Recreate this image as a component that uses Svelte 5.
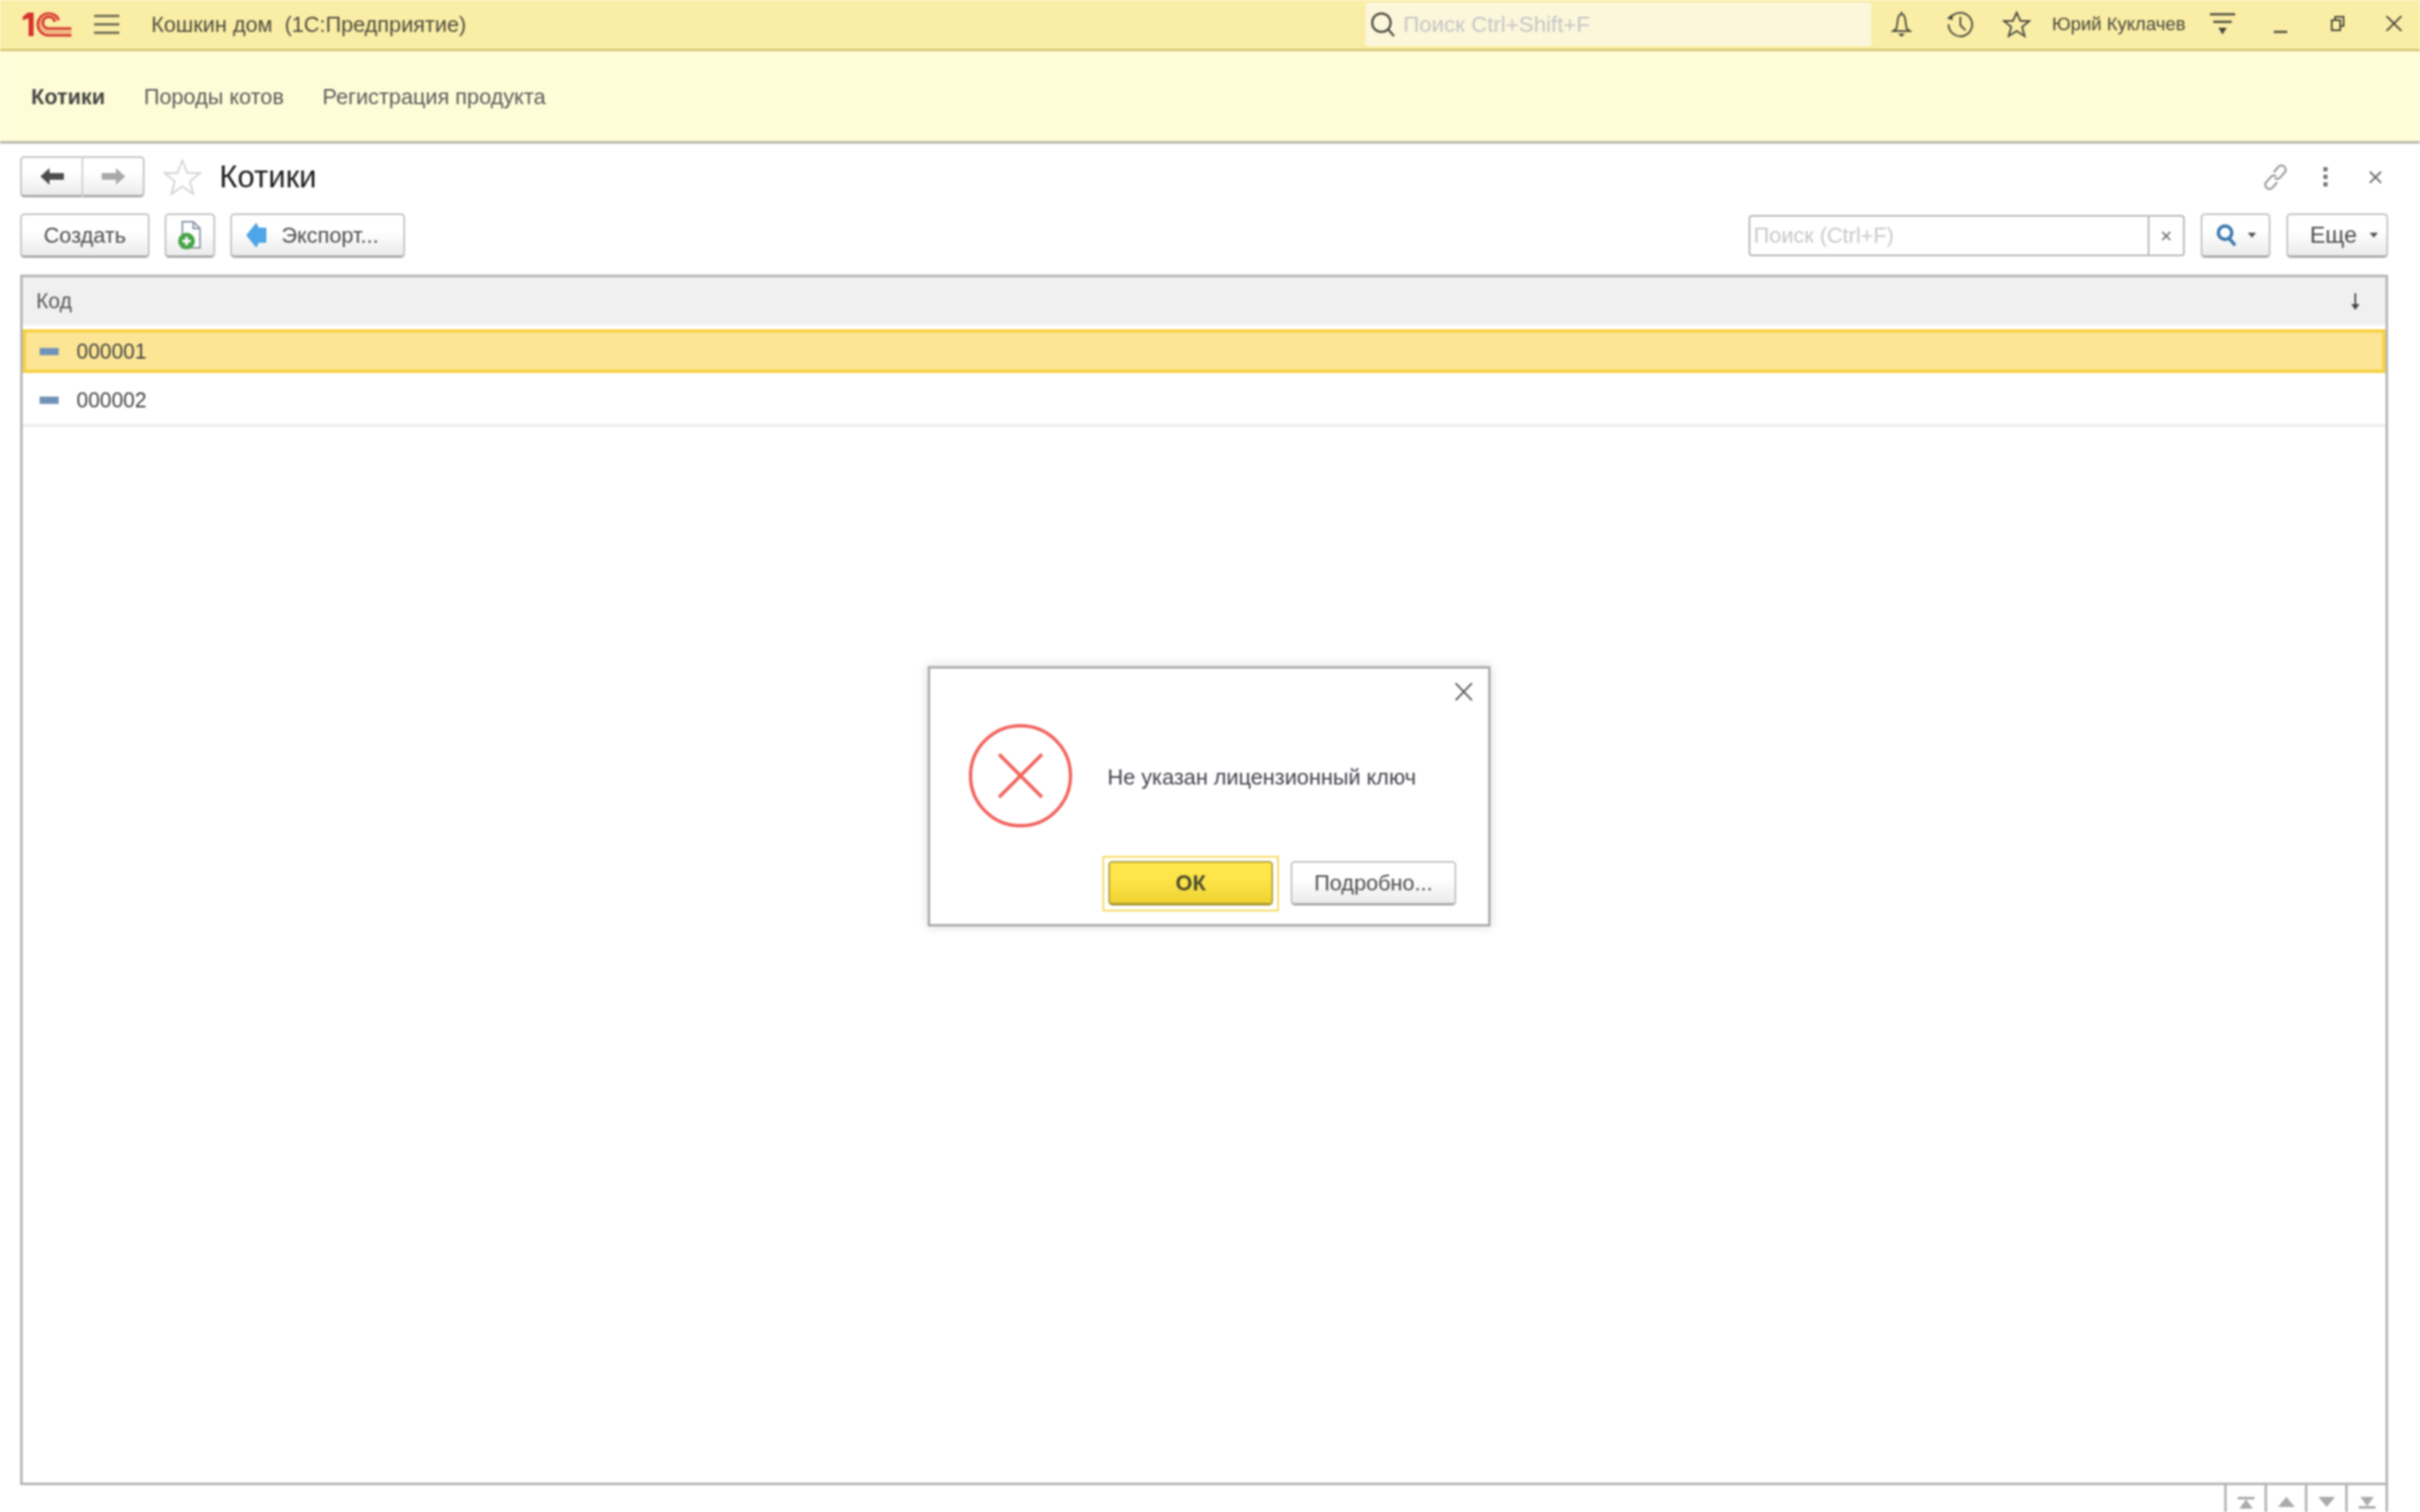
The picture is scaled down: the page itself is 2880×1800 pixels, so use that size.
<script lang="ts">
    const sections = ['Котики', 'Породы котов', 'Регистрация продукта'];
    const rows = ['000001', '000002'];
</script>

<div class="app">
    <header class="topbar">
        <svg class="logo" width="60" height="30" viewBox="0 0 60 30" fill="none">
            <path d="M1 6 7 1h7v28H8V8L1 10z" fill="#d5342e" />
            <path d="M44 10A13 13 0 1 0 31 28H59" stroke="#d5342e" stroke-width="3" />
            <path d="M41.500 11A10 10 0 1 0 31 24H59" stroke="#eda878" stroke-width="2.500" />
            <path d="M39 12A7 7 0 1 0 31 20H59" stroke="#d5342e" stroke-width="3" />
        </svg>
        <svg class="burger" width="30" height="24" viewBox="0 0 30 24" stroke="#5d5a48" stroke-width="2.500">
            <path d="M0 2h30M0 12h30M0 22h30" />
        </svg>
        <span class="app-title">Кошкин дом  (1С:Предприятие)</span>

        <div class="global-search">
            <svg width="32" height="32" viewBox="0 0 32 32" fill="none" stroke="#45453c" stroke-width="2.500">
                <circle cx="14" cy="14" r="11" />
                <path d="m22 22 7 8" />
            </svg>
            <span>Поиск Ctrl+Shift+F</span>
        </div>

        <svg class="tb-icon bell" width="28" height="32" viewBox="0 0 28 32" fill="none" stroke="#45453c" stroke-width="2">
            <path d="M14 1v3M10 8q1-4 4-4t4 4l2 13 4 3H4l4-3z" />
            <path d="M10 27h8l-4 4z" fill="#45453c" stroke="none" />
        </svg>
        <svg class="tb-icon history" width="34" height="32" viewBox="0 0 34 32" fill="none" stroke="#45453c" stroke-width="2">
            <path d="M5 9A14 14 0 1 1 3 16" />
            <path d="m1 9 6-5 1 7z" fill="#45453c" stroke="none" />
            <path d="M17 7v10l6 6" />
        </svg>
        <svg class="tb-icon star" width="34" height="32" viewBox="0 0 34 32" fill="none" stroke="#45453c" stroke-width="2">
            <path d="m17 2 4.500 10H32l-8.500 7 3 11L17 24 7.500 30l3-11L2 12h10.500z" />
        </svg>
        <span class="user">Юрий Куклачев</span>
        <svg class="tb-icon filter" width="30" height="28" viewBox="0 0 30 28" stroke="#45453c" stroke-width="2.500">
            <path d="M0 2h30M4 11h22" />
            <path d="M10 18h10l-5 8z" fill="#45453c" stroke="none" />
        </svg>
        <svg class="tb-icon minimize" width="16" height="4" viewBox="0 0 16 4" stroke="#45453c" stroke-width="2.500">
            <path d="M0 2h16" />
        </svg>
        <svg class="tb-icon restore" width="16" height="18" viewBox="0 0 16 18" fill="none" stroke="#45453c" stroke-width="2">
            <path d="M5 4V1h10v11h-3" />
            <path d="M1 5h10v12H1z" />
        </svg>
        <svg class="tb-icon win-close" width="20" height="18" viewBox="0 0 20 18" stroke="#45453c" stroke-width="2">
            <path d="m1 0 18 18M19 0 1 18" />
        </svg>
    </header>

    <nav class="sections">
        {#each sections as section, i}
            <span class:active={i === 0}>{section}</span>
        {/each}
    </nav>

    <main class="form">
        <div class="title-row">
            <div class="nav-buttons">
                <button class="btn">
                    <svg width="28" height="20" viewBox="0 0 28 20" fill="#4d4d4d"><path d="M0 10 11 0v6h17v8H11v6z" /></svg>
                </button>
                <button class="btn">
                    <svg width="28" height="20" viewBox="0 0 28 20" fill="#a9a9a9"><path d="M28 10 17 0v6H0v8h17v6z" /></svg>
                </button>
            </div>
            <svg class="fav" width="46" height="44" viewBox="0 0 46 44" fill="none" stroke="#d2d2d2" stroke-width="2">
                <path d="m23 2 6 15h15L32 27l4 15-13-9-13 9 4-15L2 17h15z" />
            </svg>
            <h1>Котики</h1>
            <div class="form-actions">
                <svg width="32" height="32" viewBox="0 0 32 32" fill="none" stroke="#8c8c8c" stroke-width="2">
                    <path d="m14 10 6-7q3-2 6 0t2 6l-7 8q-3 2-6 0" />
                    <path d="m18 22-6 7q-3 2-6 0t-2-6l7-8q3-2 6 0" />
                </svg>
                <svg width="5" height="24" viewBox="0 0 5 24" fill="#777">
                    <rect x="0" y="0" width="5" height="5" /><rect x="0" y="9" width="5" height="5" /><rect x="0" y="18" width="5" height="5" />
                </svg>
                <svg width="14" height="14" viewBox="0 0 14 14" stroke="#666" stroke-width="2">
                    <path d="m0 0 14 14M14 0 0 14" />
                </svg>
            </div>
        </div>

        <div class="toolbar">
            <button class="btn create">Создать</button>
            <button class="btn doc">
                <svg width="30" height="34" viewBox="0 0 30 34">
                    <path d="M6 1h13l8 8v23H6z" fill="#fff" stroke="#8a97a8" stroke-width="2" />
                    <path d="M19 1v8h8" fill="none" stroke="#8a97a8" stroke-width="2" />
                    <circle cx="11" cy="24" r="10" fill="#46a548" />
                    <path d="M6 24h10M11 19v10" stroke="#fff" stroke-width="3" />
                </svg>
            </button>
            <button class="btn export">
                <svg width="24" height="30" viewBox="0 0 24 30"><path d="M0 15 12 0l3 6h9v18h-9l-3 6z" fill="#4ea6e6" /></svg>
                Экспорт...
            </button>

            <div class="search">
                <span class="search-input">Поиск (Ctrl+F)</span>
                <span class="search-clear">×</span>
            </div>
            <button class="btn search-btn">
                <svg width="26" height="28" viewBox="0 0 26 28" fill="none" stroke="#3b78ad" stroke-width="4">
                    <circle cx="11" cy="11" r="8" />
                    <path d="m16 18 7 8" />
                </svg>
                <i class="caret"></i>
            </button>
            <button class="btn more">Еще <i class="caret"></i></button>
        </div>

        <div class="table">
            <div class="thead">
                <span>Код</span>
                <svg width="10" height="20" viewBox="0 0 10 20" fill="#444"><path d="M4 0h2v13h4l-5 7-5-7h4z" /></svg>
            </div>
            {#each rows as row, i}
                <div class="row" class:selected={i === 0}>
                    <i class="row-icon"></i>
                    <span>{row}</span>
                </div>
            {/each}
        </div>

        <div class="pager">
            <button aria-label="В начало"><svg width="20" height="14" viewBox="0 0 20 14" fill="#aaa"><path d="M0 0h20v3H0zM10 3l8 11H2z" /></svg></button>
            <button aria-label="Выше"><svg width="20" height="12" viewBox="0 0 20 12" fill="#aaa"><path d="M10 0l10 12H0z" /></svg></button>
            <button aria-label="Ниже"><svg width="20" height="12" viewBox="0 0 20 12" fill="#aaa"><path d="M0 0h20L10 12z" /></svg></button>
            <button aria-label="В конец"><svg width="20" height="14" viewBox="0 0 20 14" fill="#aaa"><path d="M2 0h16l-8 11zM0 11h20v3H0z" /></svg></button>
        </div>
    </main>

    <!-- modal message box -->
    <div class="dialog">
        <svg class="dialog-close" width="20" height="21" viewBox="0 0 20 21" stroke="#555" stroke-width="2">
            <path d="m0 0 20 21M20 0 0 21" />
        </svg>
        <div class="dialog-body">
            <svg width="123" height="123" viewBox="0 0 123 123" fill="none" stroke="#f2625c" stroke-width="4">
                <circle cx="61.500" cy="61.500" r="59.500" />
                <path d="m36 36 51 51M87 36 36 87" />
            </svg>
            <p>Не указан лицензионный ключ</p>
        </div>
        <div class="dialog-buttons">
            <button class="btn ok">ОК</button>
            <button class="btn details">Подробно...</button>
        </div>
    </div>
</div>

<style>
    .app {
        position: relative;
        display: flex;
        flex-direction: column;
        width: 2880px;
        height: 1800px;
        overflow: hidden;
        background: #fff;
        color: #444;
        font-family: "Liberation Sans", Arial, sans-serif;
        font-size: 25.8px;
        filter: blur(0.8px);
    }

    .topbar {
        display: flex;
        flex: none;
        align-items: center;
        height: 58px;
        padding-left: 26px;
        border-bottom: 3px solid #d8c87c;
        background: #faeda5;
    }

    .burger {
        margin-left: 26px;
    }

    .app-title {
        margin-left: 38px;
        color: #4e4c3f;
        white-space: pre;
    }

    .global-search {
        display: flex;
        align-items: center;
        gap: 8px;
        width: 602px;
        height: 52px;
        margin-left: auto;
        padding-left: 5px;
        box-sizing: border-box;
        border-radius: 3px;
        background: #fcf6da;
        color: #c6c6c6;
        font-size: 26.500px;
    }

    .tb-icon {
        flex: none;
    }

    .bell {
        margin-left: 22px;
    }

    .history {
        margin-left: 39px;
    }

    .star {
        margin-left: 33px;
    }

    .user {
        margin-left: 25px;
        width: 160px;
        color: #45453c;
        font-size: 22px;
        white-space: nowrap;
    }

    .filter {
        margin-left: 28px;
    }

    .minimize {
        margin: 18px 0 0 46px;
    }

    .restore {
        margin: -2px 0 0 52px;
    }

    .win-close {
        margin: -2px 21px 0 49px;
    }

    .sections {
        display: flex;
        flex: none;
        align-items: center;
        gap: 46px;
        height: 106px;
        padding: 1px 0 0 37px;
        border-bottom: 3px solid #b7b7ab;
        background: #fffdd8;
        color: #5a5a5a;
    }

    .sections .active {
        color: #444;
        font-weight: 700;
    }

    .form {
        display: flex;
        flex: 1;
        flex-direction: column;
        min-height: 0;
        padding: 15px 38px 0 24px;
    }

    .title-row {
        display: flex;
        flex: none;
        align-items: center;
        height: 49px;
    }

    .btn {
        display: inline-flex;
        align-items: center;
        justify-content: center;
        box-sizing: border-box;
        height: 53px;
        padding: 0;
        border: 2px solid #c2c2c2;
        border-bottom: 3px solid #aaa;
        border-radius: 5px;
        background: linear-gradient(#fff 40%, #ebebeb);
        color: #4c4c4c;
        font: inherit;
    }

    .nav-buttons {
        display: flex;
        width: 148px;
    }

    .nav-buttons .btn {
        flex: 1;
        height: 49px;
    }

    .nav-buttons .btn:first-child {
        border-right: 1px solid #d0d0d0;
        border-radius: 5px 0 0 5px;
    }

    .nav-buttons .btn:last-child {
        border-left: 1px solid #d0d0d0;
        border-radius: 0 5px 5px 0;
    }

    .fav {
        margin-left: 22px;
    }

    h1 {
        margin: 0 0 0 21px;
        color: #1c1c1c;
        font-size: 37px;
        font-weight: 400;
    }

    .form-actions {
        display: flex;
        align-items: center;
        margin-left: auto;
        padding-right: 8px;
    }

    .form-actions svg:nth-child(2) {
        margin-left: 41px;
    }

    .form-actions svg:nth-child(3) {
        margin-left: 50px;
    }

    .toolbar {
        display: flex;
        flex: none;
        align-items: center;
        height: 53px;
        margin-top: 19px;
    }

    .create {
        width: 154px;
    }

    .doc {
        width: 60px;
        margin-left: 18px;
    }

    .export {
        justify-content: flex-start;
        gap: 18px;
        width: 208px;
        margin-left: 18px;
        padding-left: 17px;
    }

    .search {
        display: flex;
        align-items: center;
        box-sizing: border-box;
        width: 519px;
        height: 49px;
        margin-left: auto;
        border: 2px solid #b5b5b5;
        border-radius: 4px;
    }

    .search-input {
        flex: 1;
        height: 100%;
        padding-left: 4px;
        border-right: 2px solid #b5b5b5;
        color: #c8c8c8;
        line-height: 45px;
    }

    .search-clear {
        width: 40px;
        color: #666;
        font-size: 24px;
        text-align: center;
    }

    .search-btn {
        gap: 12px;
        width: 83px;
        margin-left: 19px;
    }

    .caret {
        display: inline-block;
        border: 5px solid transparent;
        border-top: 6px solid #555;
        border-bottom: 0;
    }

    .more {
        justify-content: flex-start;
        gap: 15px;
        width: 121px;
        margin-left: 19px;
        padding-left: 26px;
        font-size: 27.500px;
    }

    .table {
        display: flex;
        flex: 1;
        flex-direction: column;
        min-height: 0;
        margin-top: 20px;
        border: 3px solid #b5b5b5;
    }

    .thead {
        display: flex;
        flex: none;
        align-items: center;
        justify-content: space-between;
        height: 57px;
        margin-bottom: 5px;
        padding: 0 31px 0 16px;
        background: #f0f0f0;
        color: #555;
        font-size: 25px;
    }

    .row {
        display: flex;
        flex: none;
        align-items: center;
        gap: 22px;
        box-sizing: border-box;
        height: 60px;
        padding: 0 0 1px 21px;
        border-bottom: 3px solid #ebebeb;
        font-size: 25px;
    }

    .row.selected {
        height: 52px;
        margin-bottom: 4px;
        padding: 0 0 0 17px;
        border: 4px solid #f8d044;
        background: #fce695;
    }

    .row-icon {
        width: 21px;
        height: 7px;
        background: #6f93b8;
        box-shadow: 0 0 0 1px #8ba3b8;
    }

    .pager {
        display: flex;
        flex: none;
        justify-content: flex-end;
        height: 32px;
    }

    .pager button {
        display: flex;
        justify-content: center;
        box-sizing: border-box;
        width: 48px;
        padding: 14px 0 0;
        border: 0;
        border-left: 3px solid #b5b5b5;
        background: none;
    }

    .pager button:last-child {
        width: 51px;
        border-right: 3px solid #b5b5b5;
    }

    .dialog {
        position: absolute;
        top: 793px;
        left: 1104px;
        box-sizing: border-box;
        width: 670px;
        height: 310px;
        padding: 66px 38px 0 46px;
        border: 3px solid #adadad;
        background: #fff;
        box-shadow: 0 0 12px rgba(0, 0, 0, 0.15);
    }

    .dialog-close {
        position: absolute;
        top: 17px;
        right: 19px;
    }

    .dialog-body {
        display: flex;
        align-items: center;
        gap: 42px;
    }

    .dialog-body p {
        margin: 0;
        padding-top: 3px;
        color: #42424c;
    }

    .dialog-buttons {
        display: flex;
        justify-content: flex-end;
        gap: 21px;
        margin-top: 40px;
    }

    .ok {
        position: relative;
        width: 196px;
        border: 2px solid #b5a23a;
        border-bottom: 3px solid #a8962e;
        background: linear-gradient(#fde54a 40%, #efd232);
        color: #4a4a30;
        font-weight: 700;
    }

    /* focus frame has square corners, so not an outline */
    .ok::after {
        content: "";
        position: absolute;
        inset: -8px -9px -10px;
        border: 2px solid #f8d858;
    }

    .details {
        width: 197px;
    }
</style>
